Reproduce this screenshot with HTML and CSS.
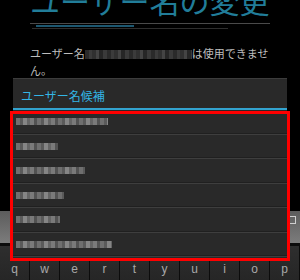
FILE: index.html
```html
<!DOCTYPE html>
<html lang="ja">
<head>
<meta charset="utf-8">
<link rel="stylesheet" href="styles.css">
</head>
<body>
<div class="screen">
  <h1 class="title">ユーザー名の変更</h1>
  <div class="rule-top"></div>
  <div class="rule-bar"></div>
  <div class="rule-under"></div>
  <p class="msg">ユーザー名<span class="mosaic-dark"></span>は使用できませ<br>ん。</p>

  <div class="keyboard">
    <div class="candidates"><span class="kb-icon"></span></div>
    <div class="keys">
      <span class="key">q</span><span class="key">w</span><span class="key">e</span><span class="key">r</span><span class="key">t</span><span class="key">y</span><span class="key">u</span><span class="key">i</span><span class="key">o</span><span class="key">p</span>
    </div>
  </div>

  <div class="dialog">
    <div class="dialog-head">ユーザー名候補</div>
    <ul class="list">
      <li class="row"><span class="mosaic m1"></span></li>
      <li class="row"><span class="mosaic m2"></span></li>
      <li class="row"><span class="mosaic m3"></span></li>
      <li class="row"><span class="mosaic m4"></span></li>
      <li class="row"><span class="mosaic m5"></span></li>
      <li class="row"><span class="mosaic m6"></span></li>
    </ul>
  </div>

  <div class="highlight"></div>
</div>
</body>
</html>
```

FILE: styles.css
```css
* { box-sizing: border-box; }
html, body { margin: 0; padding: 0; background: #000; }
body { width: 300px; height: 280px; overflow: hidden; font-family: "Noto Sans CJK JP", "Noto Sans", sans-serif; }
.screen { position: relative; width: 300px; height: 280px; overflow: hidden; background: #000; }

.title {
  margin: -15px 0 0 30px;
  font-size: 30px;
  line-height: 30px;
  font-weight: 400;
  color: #217d99;
  white-space: nowrap;
  height: 30px;
}
.rule-top { margin: 8px 0 0 30px; width: 240px; height: 1px; background: #4a4a4a; }
.rule-bar { margin: 1px 0 0 36px; width: 98px; height: 2px; background: #1d5871; }
.rule-under { margin: 1px 0 0 32px; width: 196px; height: 1px; background: #2e2e2e; }

.msg {
  margin: 16px 0 0 30px;
  font-size: 11px;
  line-height: 17px;
  color: #bdbdbd;
  white-space: nowrap;
}
.mosaic-dark {
  display: inline-block;
  width: 107px;
  height: 9px;
  vertical-align: -1px;
  background:
    repeating-linear-gradient(90deg, #2a2a2a 0 4px, #3b3b3b 4px 7px, #303030 7px 11px, #444 11px 14px, #262626 14px 18px, #3a3a3a 18px 22px);
}

.dialog {
  position: relative;
  z-index: 2;
  margin: -1px 13px 0;
  height: 180px;
  background: #292929;
  border-top: 1px solid #3c3c3c;
}
.dialog-head {
  height: 31px;
  padding: 9px 0 0 8px;
  font-size: 12px;
  line-height: 16px;
  color: #33b5e5;
  border-bottom: 2px solid #33a3cf;
}
.list { list-style: none; margin: 0; padding: 0; }
.row {
  height: 24.5px;
  display: flex;
  align-items: center;
  padding-left: 3px;
  border-bottom: 1px solid #3e3e3e;
  box-shadow: 0 -1px 0 #202020 inset;
}
.mosaic {
  display: block;
  height: 7px;
  background:
    repeating-linear-gradient(90deg, #6f6f6f 0 4px, #5a5a5a 4px 7px, #858585 7px 11px, #656565 11px 14px, #7a7a7a 14px 18px, #525252 18px 21px);
}
.m1 { width: 92px; }
.m2 { width: 42px; }
.m3 { width: 69px; }
.m4 { width: 48px; }
.m5 { width: 44px; }
.m6 { width: 96px; }

.keyboard {
  position: absolute;
  left: 0; right: 0; top: 211px; bottom: 0;
  z-index: 1;
}
.candidates {
  position: relative;
  height: 32px;
  background: linear-gradient(#5c5c5c, #7c7c7c);
}
.kb-icon {
  position: absolute;
  right: 4px; top: 5px;
  width: 8px; height: 8px;
  border: 1px solid #cfcfcf;
}
.keys {
  display: grid;
  grid-template-columns: repeat(10, 30px);
  background: #0c0c0c;
  padding-top: 3px;
  height: 37px;
}
.key {
  margin: 0 1px 0 0;
  background: linear-gradient(#2e2e2e, #262626);
  color: #a8a8a8;
  font-family: "Liberation Sans", sans-serif;
  font-size: 12px;
  line-height: 14px;
  text-align: center;
  padding-top: 16px;
}

.highlight {
  position: absolute;
  z-index: 3;
  left: 10px; top: 111px;
  width: 280px; height: 150px;
  border: 3px solid #ff0000;
}
```
